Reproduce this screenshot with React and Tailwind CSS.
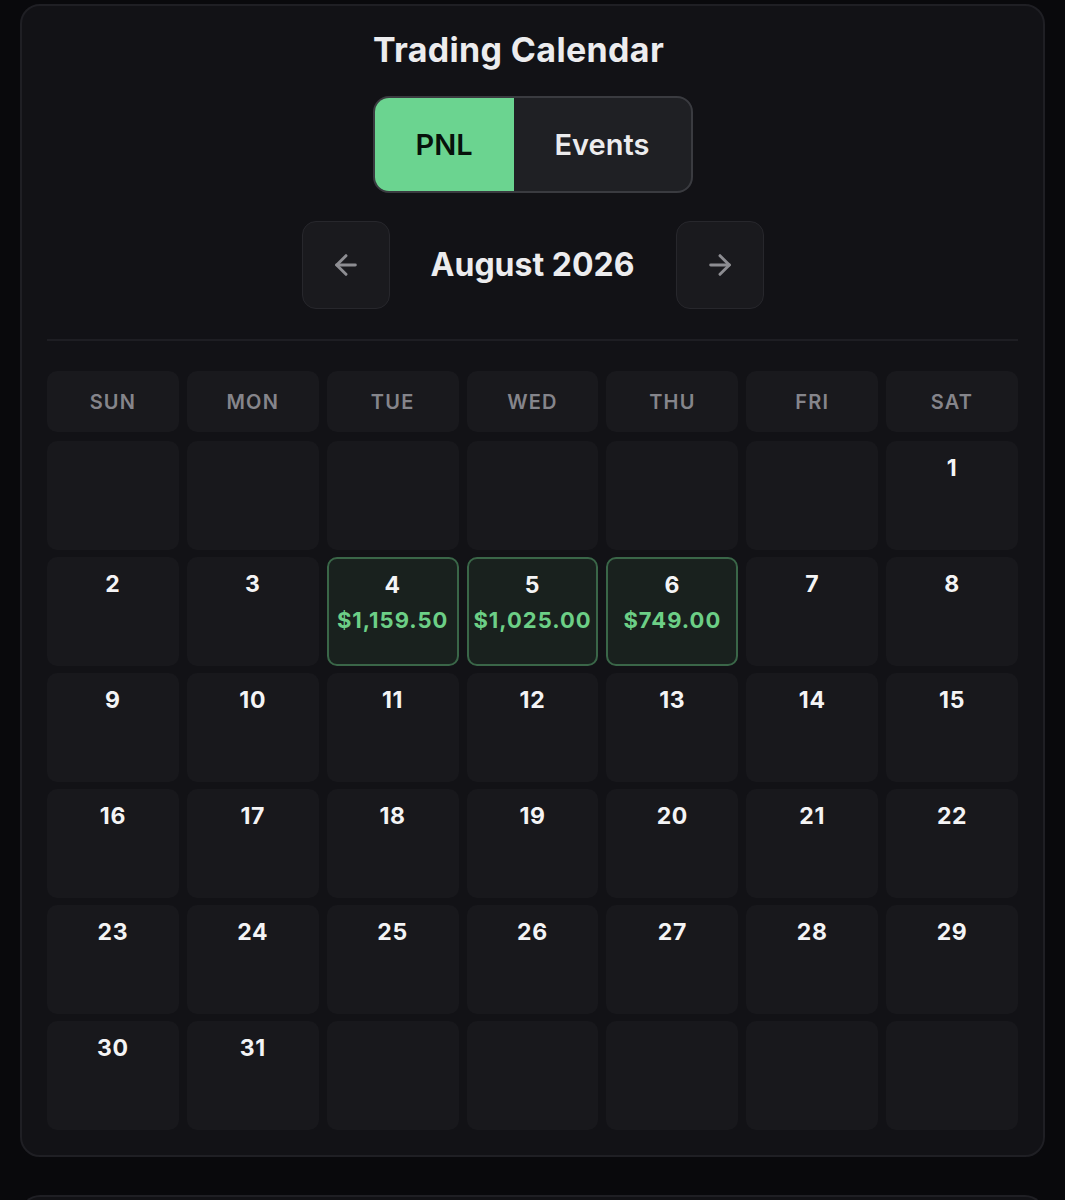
import React from "react";
import { ArrowLeft, ArrowRight } from "lucide-react";

const days = ["SUN", "MON", "TUE", "WED", "THU", "FRI", "SAT"];
const pnl = { 4: "$1,159.50", 5: "$1,025.00", 6: "$749.00" };

export default function App() {
  const cells = [];
  for (let i = 0; i < 6; i++) cells.push(null);
  for (let d = 1; d <= 31; d++) cells.push(d);
  while (cells.length < 42) cells.push(null);

  return (
    <div className="min-h-[1200px] bg-[#09090c] px-[20px] pt-[4px]" style={{ fontFamily: "Inter, 'Noto Sans', sans-serif" }}>
      <div className="rounded-[20px] border-2 border-[#1f1f24] bg-[#121216] px-[25px] pt-[23px] pb-[25px]">
        <h1 className="pr-[28px] text-center text-[34px] leading-[42px] font-bold tracking-[0.01em] text-[#ececee]">Trading Calendar</h1>
        <div className="mt-[25px] flex justify-center">
          <div className="flex h-[97px] w-[320px] overflow-hidden rounded-[16px] border-2 border-[#3a3b40] bg-[#1f2024]">
            <div className="flex w-[139px] items-center justify-center bg-[#6bd490] text-[29px] font-semibold text-[#07120b]">PNL</div>
            <div className="flex flex-1 items-center justify-center text-[29px] font-semibold text-[#ececee]">Events</div>
          </div>
        </div>
        <div className="mt-[28px] flex items-center justify-center gap-[38px]">
          <button className="flex h-[88px] w-[88px] items-center justify-center rounded-[14px] border border-[#27272c] bg-[#1a1a1e]">
            <ArrowLeft size={32} strokeWidth={2.2} color="#8d8d92" />
          </button>
          <div className="w-[210px] text-center text-[32px] font-bold text-[#ececee]">August 2026</div>
          <button className="flex h-[88px] w-[88px] items-center justify-center rounded-[14px] border border-[#27272c] bg-[#1a1a1e]">
            <ArrowRight size={32} strokeWidth={2.2} color="#8d8d92" />
          </button>
        </div>
        <div className="mt-[30px] h-[2px] bg-[#1e1e23]" />
        <div className="mt-[30px] grid grid-cols-7 gap-[8px]">
          {days.map((d) => (
            <div key={d} className="flex h-[61px] items-center justify-center rounded-[10px] bg-[#19191d] text-[20px] font-semibold tracking-[0.06em] text-[#85858b]">
              {d}
            </div>
          ))}
        </div>
        <div className="mt-[9px] grid grid-cols-7 gap-x-[8px] gap-y-[7px]">
          {cells.map((d, i) =>
            d && pnl[d] ? (
              <div key={i} className="flex h-[109px] flex-col items-center rounded-[10px] border-2 border-[#3a6648] bg-[#19211e] pt-[12px]">
                <div className="text-[23px] leading-[28px] font-bold tracking-[0.03em] text-[#f4f4f5]">{d}</div>
                <div className="mt-[8px] text-[22px] leading-[26px] font-bold tracking-[0.045em] text-[#6ccf86]">{pnl[d]}</div>
              </div>
            ) : (
              <div key={i} className="flex h-[109px] flex-col items-center rounded-[10px] bg-[#18181c] pt-[13px]">
                {d && <div className="text-[23px] leading-[28px] font-bold tracking-[0.03em] text-[#f4f4f5]">{d}</div>}
              </div>
            )
          )}
        </div>
      </div>
      <div className="mt-[38px] h-[40px] rounded-t-[20px] border-2 border-b-0 border-[#1f1f24] bg-[#121216]" />
    </div>
  );
}
